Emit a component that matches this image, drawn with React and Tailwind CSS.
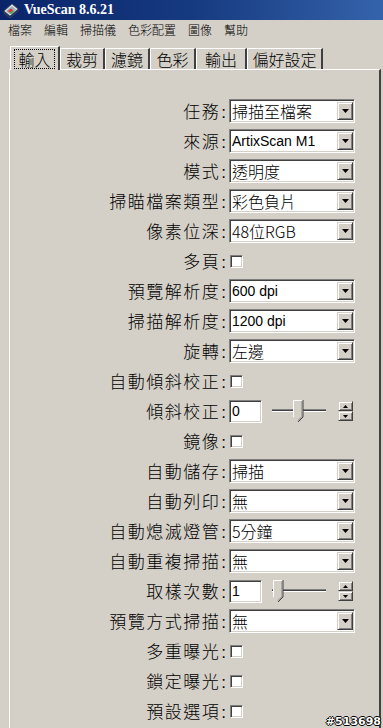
import React from "react";

const cjk = { fontFamily: '"Noto Sans CJK TC", "Noto Sans", sans-serif' };

// sunken 3D edge used by text boxes, selects and checkboxes
const sunken =
    "border border-t-[#808080] border-l-[#808080] border-b-white border-r-white shadow-[inset_1px_1px_0_#404040,inset_-1px_-1px_0_#d4d0c8]";
const raised =
    "border border-t-[#d4d0c8] border-l-[#d4d0c8] border-b-[#404040] border-r-[#404040] shadow-[inset_1px_1px_0_#ffffff,inset_-1px_-1px_0_#808080]";

function DownArrow() {
    return (
        <svg width="7" height="4" viewBox="0 0 7 4">
            <path d="M0 0h7L3.5 4z" fill="#000" />
        </svg>
    );
}

function Select({ value, latin }) {
    return (
        <div className={`w-[126px] h-[24px] bg-white flex items-center ${sunken}`}>
            <span
                className={`flex-1 pl-[2px] leading-none whitespace-nowrap ${latin ? "text-[14px]" : "text-[16px] font-light"}`}
                style={latin ? { fontFamily: '"Liberation Sans", "Noto Sans CJK TC", sans-serif' } : cjk}
            >
                {value}
            </span>
            <div className={`w-[16px] h-[18px] mr-[1px] bg-[#d4d0c8] flex items-center justify-center ${raised}`}>
                <DownArrow />
            </div>
        </div>
    );
}

function Check() {
    return <div className={`w-[13px] h-[13px] bg-white ml-[1px] ${sunken}`} />;
}

function Spin({ value, pos }) {
    return (
        <div className="flex items-center">
            <div className={`w-[33px] h-[23px] bg-white flex items-center ${sunken}`}>
                <span className="pl-[2px] text-[14px] leading-none" style={{ fontFamily: '"Liberation Sans", sans-serif' }}>
                    {value}
                </span>
            </div>
            <svg width="56" height="24" viewBox="0 0 56 24" className="ml-[10px]">
                <rect x="0" y="10" width="54" height="1" fill="#808080" />
                <rect x="0" y="11" width="54" height="1" fill="#404040" />
                <rect x="0" y="12" width="54" height="1" fill="#ffffff" />
                <g transform={`translate(${pos} 1)`}>
                    <path d="M0 0h10v17l-5 5l-5-5z" fill="#d4d0c8" />
                    <path d="M0.5 17V0.5h9.5" fill="none" stroke="#fff" />
                    <path d="M10 0v17l-5 5" fill="none" stroke="#404040" />
                    <path d="M9 1v15.5l-4 4" fill="none" stroke="#808080" />
                </g>
            </svg>
            <div className="ml-[10px] flex flex-col">
                <div className={`w-[15px] h-[10px] bg-[#d4d0c8] flex items-center justify-center ${raised}`}>
                    <svg width="5" height="3" viewBox="0 0 5 3"><path d="M2.5 0L5 3H0z" fill="#000" /></svg>
                </div>
                <div className={`w-[15px] h-[10px] bg-[#d4d0c8] flex items-center justify-center ${raised}`}>
                    <svg width="5" height="3" viewBox="0 0 5 3"><path d="M0 0h5L2.5 3z" fill="#000" /></svg>
                </div>
            </div>
        </div>
    );
}

const rows = [
    { label: "任務", type: "select", value: "掃描至檔案" },
    { label: "來源", type: "select", value: "ArtixScan M1", latin: true },
    { label: "模式", type: "select", value: "透明度" },
    { label: "掃瞄檔案類型", type: "select", value: "彩色負片" },
    { label: "像素位深", type: "select", value: "48位RGB" },
    { label: "多頁", type: "check" },
    { label: "預覽解析度", type: "select", value: "600 dpi", latin: true },
    { label: "掃描解析度", type: "select", value: "1200 dpi", latin: true },
    { label: "旋轉", type: "select", value: "左邊" },
    { label: "自動傾斜校正", type: "check" },
    { label: "傾斜校正", type: "spin", value: "0", pos: 21 },
    { label: "鏡像", type: "check" },
    { label: "自動儲存", type: "select", value: "掃描" },
    { label: "自動列印", type: "select", value: "無" },
    { label: "自動熄滅燈管", type: "select", value: "5分鐘" },
    { label: "自動重複掃描", type: "select", value: "無" },
    { label: "取樣次數", type: "spin", value: "1", pos: 1 },
    { label: "預覽方式掃描", type: "select", value: "無" },
    { label: "多重曝光", type: "check" },
    { label: "鎖定曝光", type: "check" },
    { label: "預設選項", type: "check" },
];

const menus = ["檔案", "編輯", "掃描儀", "色彩配置", "圖像", "幫助"];
const tabs = [
    { label: "輸入", w: "w-[50px]" },
    { label: "裁剪", w: "w-[45px]" },
    { label: "濾鏡", w: "w-[45px]" },
    { label: "色彩", w: "w-[46px]" },
    { label: "輸出", w: "w-[51px]" },
    { label: "偏好設定", w: "w-[76px]" },
];

function AppIcon() {
    return (
        <svg width="16" height="16" viewBox="0 0 16 16">
            <path d="M1 9l8-7 6 5-8 7z" fill="#e8e8e8" stroke="#505050" strokeWidth="0.8" />
            <path d="M3 9l6-5 4 3.5-6 5z" fill="#9ab" />
            <path d="M5 9l3-2.5 2 1.8-3 2.5z" fill="#d33" />
            <path d="M7 11l3-2.5 1 1-3 2.5z" fill="#3a3" />
            <path d="M1 9v2l6 5 8-7V7" fill="none" stroke="#505050" strokeWidth="0.8" />
        </svg>
    );
}

export default function App() {
    return (
        <div className="w-[383px] h-[728px] bg-[#d4d0c8] overflow-hidden relative text-black" style={cjk}>
            {/* Title bar */}
            <div className="h-[20px] flex items-center pl-[3px] bg-gradient-to-r from-[#0a246a] via-[#163a80] to-[#3563ab]">
                <AppIcon />
                <span
                    className="ml-[5px] text-white font-bold text-[14px] leading-none"
                    style={{ fontFamily: '"Liberation Serif", serif' }}
                >
                    VueScan 8.6.21
                </span>
            </div>

            {/* Menu bar */}
            <div className="h-[19px] flex items-center gap-3 pl-[8px] text-[12px] leading-none font-light">
                {menus.map((m) => (
                    <span key={m}>{m}</span>
                ))}
            </div>

            {/* Tabs */}
            <div className="mt-[7px] h-[23px] flex items-end pl-[10px] relative z-10">
                {tabs.map((t, i) =>
                    i === 0 ? (
                        <div
                            key={t.label}
                            className={`${t.w} h-[24px] -mb-px flex items-center justify-center bg-[#d4d0c8] border-t border-l border-white border-r-2 border-r-[#404040]`}
                        >
                            <span className="text-[16px] leading-none px-[3px] py-[1px] font-light outline-1 outline-dotted outline-black">
                                {t.label}
                            </span>
                        </div>
                    ) : (
                        <div
                            key={t.label}
                            className={`${t.w} h-[21px] flex items-center justify-center border-t border-l border-white border-r-2 border-r-[#404040]`}
                        >
                            <span className="text-[16px] leading-none font-light">{t.label}</span>
                        </div>
                    )
                )}
            </div>

            {/* Panel */}
            <div className="ml-[9px] w-[372px] h-[700px] border-t border-l border-white border-r-2 border-r-[#404040] pt-[26px]">
                {rows.map((r) => (
                    <div key={r.label} className="h-[30px] flex items-center">
                        <div className="w-[216px] text-right text-[17px] leading-none whitespace-nowrap font-light tracking-[1.5px]">
                            {r.label}
                            <span className="tracking-normal pl-[1px]" style={{ fontFamily: '"Liberation Sans", sans-serif' }}>:</span>
                        </div>
                        <div className="ml-[3px]">
                            {r.type === "select" && <Select value={r.value} latin={r.latin} />}
                            {r.type === "check" && <Check />}
                            {r.type === "spin" && <Spin value={r.value} pos={r.pos} />}
                        </div>
                    </div>
                ))}
            </div>

            {/* watermark */}
            <div
                className="absolute right-[2px] bottom-[1px] text-[11px] font-bold text-white leading-none [text-shadow:1px_0_0_#000,-1px_0_0_#000,0_1px_0_#000,0_-1px_0_#000]"
                style={{ fontFamily: '"DejaVu Sans", sans-serif' }}
            >
                #513698
            </div>
        </div>
    );
}
